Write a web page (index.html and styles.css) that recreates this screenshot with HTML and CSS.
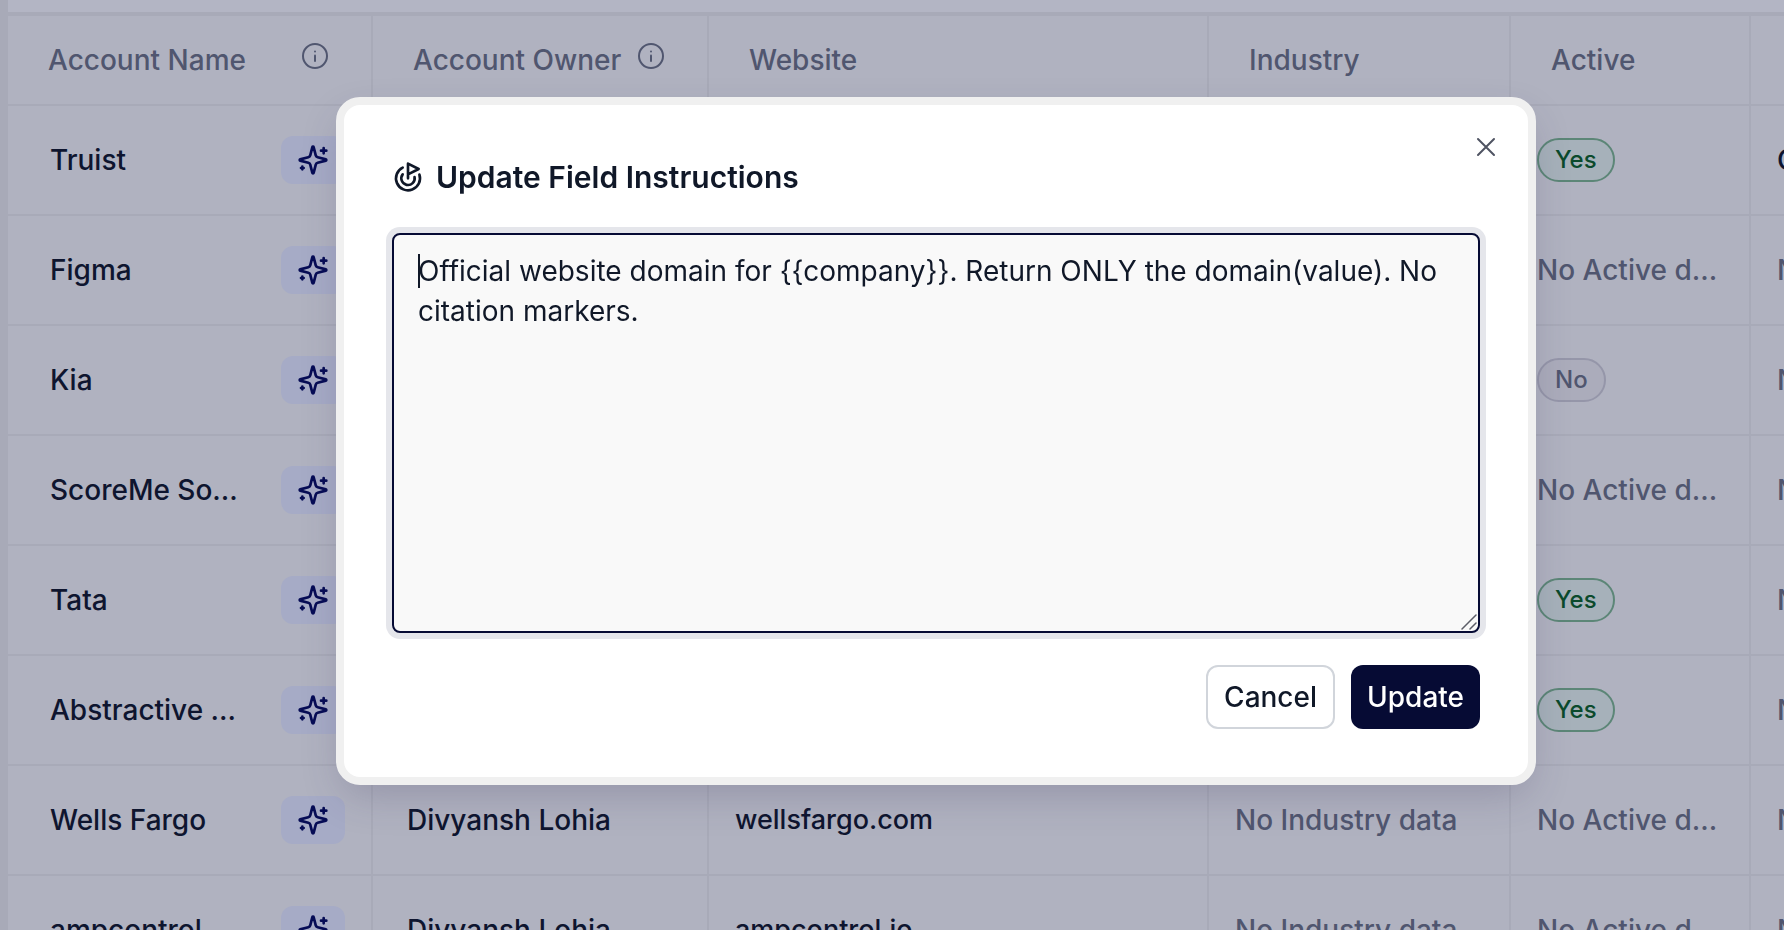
FILE: index.html
```html
<!DOCTYPE html>
<html lang="en">
<head>
<meta charset="utf-8">
<title>Accounts</title>
<link rel="stylesheet" href="styles.css">
</head>
<body>
<svg class="sprite" aria-hidden="true">
  <symbol id="info" viewBox="0 0 26 26"><circle cx="13" cy="13" r="12"/><path d="M13 12.500v5.500"/><path d="M13 8.500v.01"/></symbol>
  <symbol id="sparkles" viewBox="0 0 24 24"><path d="M9.937 15.500A2 2 0 0 0 8.500 14.063l-6.135-1.582a.5.5 0 0 1 0-.962L8.500 9.936A2 2 0 0 0 9.937 8.500l1.582-6.135a.5.5 0 0 1 .963 0L14.063 8.500A2 2 0 0 0 15.500 9.937l6.135 1.581a.5.5 0 0 1 0 .964L15.500 14.063a2 2 0 0 0-1.437 1.437l-1.582 6.135a.5.5 0 0 1-.963 0z"/><path d="M20 3v4M22 5h-4M4 17v2M5 18H3"/></symbol>
</svg>
<main class="page">
  <div class="toolbar"></div>
  <table class="grid">
    <colgroup><col class="col-name"><col class="col-owner"><col class="col-website"><col class="col-industry"><col class="col-active"><col class="col-next"></colgroup>
    <thead>
      <tr>
        <th><div class="head">Account Name <svg class="info"><use href="#info"/></svg></div></th>
        <th><div class="head">Account Owner <svg class="info"><use href="#info"/></svg></div></th>
        <th>Website</th>
        <th>Industry</th>
        <th>Active</th>
        <th></th>
      </tr>
    </thead>
    <tbody>
      <tr><td><div class="name"><span>Truist</span><button class="ai" aria-label="Enrich"><svg><use href="#sparkles"/></svg></button></div></td><td></td><td></td><td></td><td><span class="badge yes">Yes</span></td><td>C</td></tr>
      <tr><td><div class="name"><span>Figma</span><button class="ai" aria-label="Enrich"><svg><use href="#sparkles"/></svg></button></div></td><td></td><td></td><td></td><td class="empty">No Active d...</td><td class="empty">N</td></tr>
      <tr><td><div class="name"><span>Kia</span><button class="ai" aria-label="Enrich"><svg><use href="#sparkles"/></svg></button></div></td><td></td><td></td><td></td><td><span class="badge no">No</span></td><td class="empty">N</td></tr>
      <tr><td><div class="name"><span>ScoreMe So...</span><button class="ai" aria-label="Enrich"><svg><use href="#sparkles"/></svg></button></div></td><td></td><td></td><td></td><td class="empty">No Active d...</td><td class="empty">N</td></tr>
      <tr><td><div class="name"><span>Tata</span><button class="ai" aria-label="Enrich"><svg><use href="#sparkles"/></svg></button></div></td><td></td><td></td><td></td><td><span class="badge yes">Yes</span></td><td class="empty">N</td></tr>
      <tr><td><div class="name"><span>Abstractive ...</span><button class="ai" aria-label="Enrich"><svg><use href="#sparkles"/></svg></button></div></td><td></td><td></td><td></td><td><span class="badge yes">Yes</span></td><td class="empty">N</td></tr>
      <tr><td><div class="name"><span>Wells Fargo</span><button class="ai" aria-label="Enrich"><svg><use href="#sparkles"/></svg></button></div></td><td>Divyansh Lohia</td><td>wellsfargo.com</td><td class="empty">No Industry data</td><td class="empty">No Active d...</td><td class="empty">N</td></tr>
      <tr><td><div class="name"><span>ampcontrol</span><button class="ai" aria-label="Enrich"><svg><use href="#sparkles"/></svg></button></div></td><td>Divyansh Lohia</td><td>ampcontrol.io</td><td class="empty">No Industry data</td><td class="empty">No Active d...</td><td class="empty">N</td></tr>
    </tbody>
  </table>
</main>

<div class="overlay">
  <form class="dialog" role="dialog" aria-labelledby="dialog-title">
    <button class="close" type="button" aria-label="Close"><svg viewBox="0 0 24 24"><path d="M4 4l16 16M20 4L4 20"/></svg></button>
    <h2 class="title">
      <svg class="goal" viewBox="0 0 24 24"><path d="M12 13V2l8 4-8 4"/><path d="M20.561 10.222a9 9 0 1 1-12.550-5.290"/><path d="M8.002 9.997a5 5 0 1 0 8.900 2.020"/></svg>
      <label id="dialog-title" for="instructions">Update Field Instructions</label>
    </h2>
    <div class="field">
      <textarea id="instructions" spellcheck="false">Official website domain for {{company}}. Return ONLY the domain(value). No citation markers.</textarea>
      <span class="caret"></span>
      <svg class="grip" viewBox="0 0 16 16"><path d="M1 15L15 1M9 15l6-6"/></svg>
    </div>
    <div class="actions">
      <button class="btn" type="button">Cancel</button>
      <button class="btn primary" type="submit">Update</button>
    </div>
  </form>
</div>
</body>
</html>
```
FILE: styles.css
```css
* { box-sizing: border-box; }

body {
  margin: 0;
  height: 100vh;
  overflow: hidden;
  background: #b0b2c0;
  color: #0e152f;
  font: 500 28px/40px Inter, "Liberation Sans", sans-serif;
}

button, textarea { font: inherit; color: inherit; }
button { padding: 0; border: 0; background: none; cursor: pointer; }
svg { fill: none; stroke: currentColor; stroke-width: 2; stroke-linecap: round; stroke-linejoin: round; }
.sprite { display: none; }

.page {
  height: 100%;
  overflow: hidden;
  border-left: 8px solid #a8aab8;
}
.toolbar {
  height: 16px;
  background: #b3b5c4;
  border-bottom: 4px solid #a8aab8;
}

.grid {
  width: 2000px;
  table-layout: fixed;
  border-collapse: separate;
  border-spacing: 0;
}
.col-name { width: 365px; }
.col-owner { width: 336px; }
.col-website { width: 500px; }
.col-industry { width: 302px; }
.col-active { width: 240px; }

th, td {
  border-right: 2px solid #a8aab8;
  border-bottom: 2px solid #a8aab8;
  text-align: left;
  white-space: nowrap;
}
th {
  height: 90px;
  padding: 0 43px 0 40px;
  color: #50566f;
  font-weight: 500;
}
td { height: 110px; padding: 0 26px; }
td:nth-child(1) { padding-left: 42px; }
td:nth-child(2) { padding-left: 34px; }
td:nth-child(3) { font-size: 27px; }
.empty { color: #50566f; }

.head { display: flex; justify-content: space-between; }
.info { width: 26px; height: 26px; margin-top: 3px; }

.name { display: flex; align-items: center; justify-content: space-between; }
.ai {
  display: grid;
  place-items: center;
  width: 64px;
  height: 48px;
  border-radius: 12px;
  background: #a6abc6;
  color: #060c55;
}
.ai svg { width: 32px; height: 32px; }

.badge {
  display: inline-block;
  padding: 0 16px;
  border: 2px solid;
  border-radius: 22px;
  font-size: 24px;
  vertical-align: middle;
}
.yes { background: #a6b1ba; border-color: #5c8677; color: #0b4a2c; }
.no { background: #abacbb; border-color: #9596a9; color: #50566f; }

.overlay {
  position: fixed;
  inset: 0;
  display: grid;
  place-items: center;
}
.dialog {
  position: relative;
  width: 1200px;
  max-width: 90%;
  margin-left: 88px;
  margin-bottom: 48px;
  padding: 48px;
  border: 8px solid #f0f0f0;
  border-radius: 24px;
  background: #fff;
  color: #101828;
  box-shadow: 0 16px 40px -8px rgba(60, 50, 90, .25);
}
.close {
  position: absolute;
  top: 30px;
  right: 30px;
  width: 24px;
  height: 24px;
  color: #4f5362;
}
.close svg { display: block; }
.title {
  display: flex;
  align-items: center;
  gap: 12px;
  margin: 0 0 32px;
  font-size: 30px;
  font-weight: 600;
  line-height: 48px;
}
.goal { width: 32px; height: 32px; }

.field { position: relative; }
textarea {
  display: block;
  width: 100%;
  height: 400px;
  padding: 16px 24px;
  border: 2px solid #060b34;
  border-radius: 8px;
  outline: 0;
  background: #f9f9f9;
  box-shadow: 0 0 0 6px #e5e6eb;
  font-weight: 400;
  resize: none;
}
.caret {
  position: absolute;
  top: 21px;
  left: 26px;
  width: 2px;
  height: 34px;
  background: #101828;
}
.grip {
  position: absolute;
  right: 3px;
  bottom: 3px;
  width: 16px;
  height: 16px;
  stroke: #5c5e68;
}
.grip path { stroke-width: 1.5; }

.actions { display: flex; justify-content: flex-end; gap: 16px; margin-top: 32px; }
.btn {
  height: 64px;
  padding: 0 16px;
  border: 2px solid #d1d5db;
  border-radius: 12px;
  background: #fff;
}
.primary { border: 0; background: #060b34; color: #fff; }
```
